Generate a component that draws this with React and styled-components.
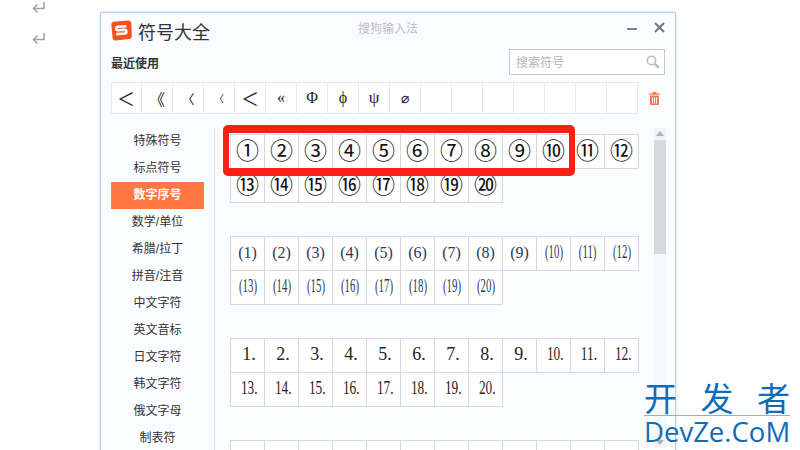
import React from 'react';
import styled, { createGlobalStyle } from 'styled-components';

const GlobalStyle = createGlobalStyle`
  html, body {
    margin: 0;
    padding: 0;
    width: 800px;
    height: 450px;
    overflow: hidden;
    background: #fff;
    font-family: "Liberation Sans", "Noto Sans CJK SC", sans-serif;
  }
`;

const recent = [
  { ch: '＜', size: 18 },
  { ch: '《', size: 16 },
  { ch: '〈', size: 13 },
  { ch: '〈', size: 10 },
  { ch: '＜', size: 18 },
  { ch: '«', size: 16 },
  { ch: 'Φ', size: 16 },
  { ch: 'ϕ', size: 16 },
  { ch: 'ψ', size: 17 },
  { ch: '⌀', size: 14 },
  ...Array(7).fill({ ch: '' }),
];

const categories = [
  '特殊符号', '标点符号', '数字序号', '数学/单位', '希腊/拉丁', '拼音/注音',
  '中文字符', '英文音标', '日文字符', '韩文字符', '俄文字母', '制表符',
];

const numbers = Array.from({ length: 20 }, (_, i) => i + 1);
const circled = '①②③④⑤⑥⑦⑧⑨⑩⑪⑫⑬⑭⑮⑯⑰⑱⑲⑳'.split('');
const bracketed = numbers.map((n) => `(${n})`);
const dotted = numbers.map((n) => `${n}.`);
const roman = 'ⅠⅡⅢⅣⅤⅥⅦⅧⅨⅩⅪⅫ'.split('');

const Page = styled.div`
  position: relative;
  display: flex;
  width: 800px;
  height: 450px;
  overflow: hidden;
`;

const Margin = styled.div`
  width: 100px;
  flex: none;
  display: flex;
  flex-direction: column;
  gap: 19px;
  padding: 2px 0 0 32px;
  box-sizing: border-box;
`;

const Window = styled.div`
  width: 576px;
  height: 480px;
  margin-top: 12px;
  flex: none;
  box-sizing: border-box;
  background: #fbfcff;
  border: 1px solid #bfd3e6;
  box-shadow: 0 0 4px rgba(150, 180, 210, 0.45);
  padding: 0 10px;
`;

const TitleBar = styled.div`
  display: flex;
  align-items: center;
  height: 35px;
`;

const Brand = styled.div`
  display: flex;
  align-items: center;
  gap: 6px;
  width: 247px;
  font-size: 18px;
  color: #333;
`;

const AppName = styled.div`
  flex: 1;
  margin-bottom: 6px;
  font-size: 12px;
  color: #bdbdbd;
`;

const WindowButton = styled.button`
  display: flex;
  align-items: center;
  justify-content: center;
  margin: 0 0 7px 17px;
  padding: 0;
  border: 0;
  background: none;
`;

const RecentHead = styled.div`
  display: flex;
  align-items: center;
  justify-content: space-between;
  height: 27px;
`;

const RecentLabel = styled.div`
  margin-top: 2px;
  font-size: 12px;
  font-weight: bold;
  color: #333;
`;

const Search = styled.div`
  display: flex;
  align-items: center;
  justify-content: space-between;
  width: 156px;
  height: 26px;
  box-sizing: border-box;
  padding: 0 4px 0 6px;
  background: #fff;
  border: 1px solid #c4c7ca;
  font-size: 12px;
  color: #b4b4b4;
`;

const RecentRow = styled.div`
  display: flex;
  align-items: center;
  gap: 10px;
  margin-top: 7px;
`;

const RecentGrid = styled.div`
  display: grid;
  grid-template-columns: repeat(17, 31px);
  width: 528px;
  height: 32px;
  box-sizing: border-box;
  background: #fff;
  border-top: 1px solid #e6eaee;
  border-left: 1px solid #e6eaee;
`;

const RecentCell = styled.div`
  display: flex;
  align-items: center;
  justify-content: center;
  width: 31px;
  height: 31px;
  margin-left: -1px;
  box-sizing: border-box;
  border-right: 1px solid #e6eaee;
  border-bottom: 1px solid #e6eaee;
  font-family: "Liberation Serif", "Noto Sans CJK SC", "DejaVu Sans", serif;
  font-size: ${(p) => p.$size || 16}px;
  color: #222;
`;

const Body = styled.div`
  display: flex;
  margin-top: 14px;
`;

const Sidebar = styled.div`
  width: 93px;
  flex: none;
  display: flex;
  flex-direction: column;
`;

const Category = styled.div`
  height: 27px;
  line-height: 27px;
  text-align: center;
  font-size: 12px;
  font-weight: ${(p) => (p.$active ? 'bold' : 'normal')};
  color: ${(p) => (p.$active ? '#fff' : '#333')};
  background: ${(p) => (p.$active ? '#ff7846' : 'transparent')};
`;

const Divider = styled.div`
  width: 1px;
  height: 340px;
  flex: none;
  margin-left: 10px;
  background: #d9e1ea;
`;

const Symbols = styled.div`
  width: 409px;
  margin: 6px 0 0 15px;
  flex: none;
  display: flex;
  flex-direction: column;
  gap: 34px;
`;

const SymbolGrid = styled.div`
  display: grid;
  grid-template-columns: repeat(12, 34px);
  grid-auto-rows: 34px;
`;

const cellStyles = {
  circled: 'font-family: "Noto Sans CJK SC", sans-serif; font-size: 23px; color: #111; padding-bottom: 5px;',
  bracketed: 'font-size: 16px; color: #2e3a52; padding-bottom: 2px;',
  dotted: 'font-size: 18px; color: #2b2320; padding: 0 0 3px 3px;',
  roman: 'font-size: 18px; color: #444; padding-top: 21px; overflow: hidden;',
};

const SymbolCell = styled.div`
  display: flex;
  align-items: center;
  justify-content: center;
  box-sizing: border-box;
  margin: 0 -1px -1px 0;
  background: #fff;
  border: 1px solid #d2d9e0;
  font-family: "Liberation Serif", "Noto Sans CJK SC", serif;
  ${(p) => cellStyles[p.$kind]}
`;

const SymbolText = styled.span`
  display: inline-block;
  white-space: nowrap;
  transform: scaleX(${(p) => p.$squeeze});
  font-size: ${(p) => (p.$squeeze < 1 ? '18px' : 'inherit')};
`;

const Scrollbar = styled.div`
  width: 12px;
  height: 320px;
  margin-left: 15px;
  flex: none;
  display: flex;
  flex-direction: column;
  background: #f6f8fb;
  border-radius: 1px;
`;

const ScrollArrow = styled.div`
  height: 11px;
  flex: none;
  display: flex;
  align-items: center;
  justify-content: center;
  background: #eff3f6;
`;

const ScrollThumb = styled.div`
  height: 114px;
  margin: 1px 0 auto;
  background: #d3dbe0;
`;

const Highlight = styled.div`
  position: absolute;
  left: 223px;
  top: 125px;
  width: 352px;
  height: 51px;
  box-sizing: border-box;
  border: solid #fb1f14;
  border-width: 8px 6px;
  border-radius: 5px;
`;

const Watermark = styled.div`
  position: absolute;
  left: 644px;
  top: 384px;
  width: 146px;
  color: #0f6cb8;
  text-align: center;
`;

const WatermarkTitle = styled.div`
  display: flex;
  justify-content: space-between;
  height: 31px;
  line-height: 31px;
  font-size: 33px;
  border-bottom: 1px solid #6cc0de;
`;

const WatermarkUrl = styled.div`
  font-family: "Open Sans", "Liberation Sans", sans-serif;
  font-size: 27.5px;
  line-height: 31px;
  white-space: nowrap;
`;

const ReturnMark = () => (
  <svg width="13" height="12" viewBox="0 0 13 12" fill="none" stroke="#a2a2a2" strokeWidth="1.6">
    <path d="M12 0v6.500H2" />
    <path d="M5.500 2.500 1.500 6.500l4 4" />
  </svg>
);

const Logo = () => (
  <svg width="21" height="21" viewBox="0 0 21 21">
    <path d="M5 1.500 17 .5q3 0 3.300 2.800l.5 12.500q0 3-2.800 3.300L5 20.500q-3 .2-3.400-2.700L.4 5Q.3 2 3 1.700z" fill="#f4511e" />
    <path d="M15.500 6.200 7 6.800q-1.800.2-1.700 1.800t1.900 1.600l6.300-.4q1.800 0 1.900 1.700t-1.800 2l-8.400.6" fill="none" stroke="#fff" strokeWidth="2.600" />
  </svg>
);

const SearchIcon = () => (
  <svg width="14" height="14" viewBox="0 0 14 14" fill="none" stroke="#bcbcbc">
    <circle cx="5.500" cy="5.500" r="4.200" strokeWidth="1.600" />
    <path d="M8.800 8.800 13 13" strokeWidth="2.400" />
  </svg>
);

const TrashIcon = () => (
  <svg width="11" height="13" viewBox="0 0 11 13" fill="#ff7443">
    <path d="M3.500 0h4v1.400H11v1.400H0V1.400h3.500z" />
    <path d="M1 3.600h9V13H1zM3 5.200v6.300h1V5.200zm2 0v6.300h1V5.200zm2 0v6.300h1V5.200z" fillRule="evenodd" />
  </svg>
);

const MinimizeIcon = () => (
  <svg width="10" height="6" viewBox="0 0 10 6"><path d="M0 4h10v2H0z" fill="#7c8287" /></svg>
);

const CloseIcon = () => (
  <svg width="11" height="11" viewBox="0 0 11 11" stroke="#70767b" strokeWidth="2"><path d="M1 1l9 9M10 1l-9 9" /></svg>
);

const ArrowIcon = ({ down }) => (
  <svg width="8" height="5" viewBox="0 0 8 5">
    <path d={down ? 'M0 0h8L4 5z' : 'M4 0l4 5H0z'} fill="#a9b4bc" />
  </svg>
);

// two digit numbers are squeezed into the same cell width as the one digit ones
const squeezeOf = (item, kind) => {
  if (kind === 'bracketed') return item.length > 3 ? 0.6 : 1;
  if (kind === 'dotted') return item.length > 2 ? 0.74 : 1;
  return 1;
};

const SymbolTable = ({ items, kind }) => (
  <SymbolGrid>
    {items.map((item) => (
      <SymbolCell key={item} $kind={kind}>
        <SymbolText $squeeze={squeezeOf(item, kind)}>{item}</SymbolText>
      </SymbolCell>
    ))}
  </SymbolGrid>
);

const App = () => (
  <Page>
    <GlobalStyle />
    <Margin>
      <ReturnMark />
      <ReturnMark />
    </Margin>
    <Window>
      <TitleBar>
        <Brand><Logo />符号大全</Brand>
        <AppName>搜狗输入法</AppName>
        <WindowButton><MinimizeIcon /></WindowButton>
        <WindowButton><CloseIcon /></WindowButton>
      </TitleBar>
      <RecentHead>
        <RecentLabel>最近使用</RecentLabel>
        <Search>搜索符号<SearchIcon /></Search>
      </RecentHead>
      <RecentRow>
        <RecentGrid>
          {recent.map((item, i) => <RecentCell key={i} $size={item.size}>{item.ch}</RecentCell>)}
        </RecentGrid>
        <TrashIcon />
      </RecentRow>
      <Body>
        <Sidebar>
          {categories.map((name) => (
            <Category key={name} $active={name === '数字序号'}>{name}</Category>
          ))}
        </Sidebar>
        <Divider />
        <Symbols>
          <SymbolTable items={circled} kind="circled" />
          <SymbolTable items={bracketed} kind="bracketed" />
          <SymbolTable items={dotted} kind="dotted" />
          <SymbolTable items={roman} kind="roman" />
        </Symbols>
        <Scrollbar>
          <ScrollArrow><ArrowIcon /></ScrollArrow>
          <ScrollThumb />
          <ScrollArrow><ArrowIcon down /></ScrollArrow>
        </Scrollbar>
      </Body>
    </Window>
    <Highlight />
    <Watermark>
      <WatermarkTitle><span>开</span><span>发</span><span>者</span></WatermarkTitle>
      <WatermarkUrl>DevZe.CoM</WatermarkUrl>
    </Watermark>
  </Page>
);

export default App;
